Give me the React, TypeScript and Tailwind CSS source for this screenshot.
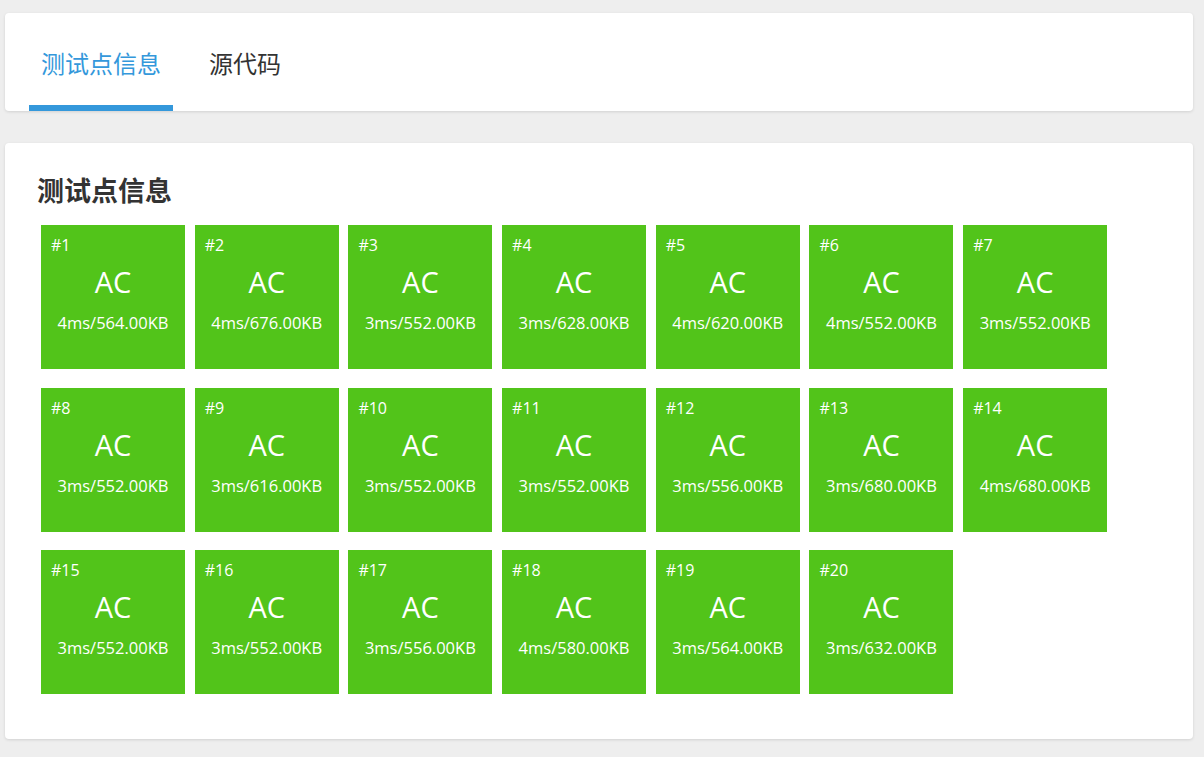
import React from "react";

const data: [string, string][] = [
  ["4ms", "564.00KB"], ["4ms", "676.00KB"], ["3ms", "552.00KB"], ["3ms", "628.00KB"], ["4ms", "620.00KB"],
  ["4ms", "552.00KB"], ["3ms", "552.00KB"], ["3ms", "552.00KB"], ["3ms", "616.00KB"], ["3ms", "552.00KB"],
  ["3ms", "552.00KB"], ["3ms", "556.00KB"], ["3ms", "680.00KB"], ["4ms", "680.00KB"], ["3ms", "552.00KB"],
  ["3ms", "552.00KB"], ["3ms", "556.00KB"], ["4ms", "580.00KB"], ["3ms", "564.00KB"], ["3ms", "632.00KB"],
];

export default function App() {
  return (
    <div
      className="min-h-[757px] bg-[#eeeeee] pl-[5px] pr-[11px] pt-[13px] pb-[18px]"
      style={{ fontFamily: '"Open Sans", "Noto Sans CJK SC", sans-serif' }}
    >
      <div className="bg-white rounded-[4px] shadow-[0_1px_3px_rgba(0,0,0,0.12)] h-[98px] flex items-end px-[24px]">
        <div className="w-[144px] h-full flex flex-col">
          <div className="flex-1 flex items-center justify-center pt-[10px] text-[24px] text-[#3498db]">测试点信息</div>
          <div className="h-[6px] bg-[#3498db]" />
        </div>
        <div className="w-[144px] h-full flex flex-col">
          <div className="flex-1 flex items-center justify-center pt-[10px] text-[24px] text-[#333333]">源代码</div>
          <div className="h-[6px]" />
        </div>
      </div>

      <div className="mt-[32px] bg-white rounded-[4px] shadow-[0_1px_3px_rgba(0,0,0,0.12)] pl-[32px] pt-[30px] pb-[45px]">
        <h2 className="text-[27px] font-bold text-[#333333] leading-[36px]">测试点信息</h2>
        <div className="mt-[16px] ml-[4px] grid grid-cols-[repeat(7,144px)] gap-x-[9.7px] gap-y-[18.5px]">
          {data.map(([t, m], i) => (
            <div key={i} className="w-[144px] h-[144px] bg-[#52c41a] text-white flex flex-col">
              <div className="pl-[10px] pt-[10px] text-[16px] leading-[20px]">#{i + 1}</div>
              <div className="text-center text-[29px] leading-[36px] mt-[9px]">AC</div>
              <div className="text-center text-[16.5px] leading-[20px] mt-[13px] whitespace-nowrap">
                {t}/{m}
              </div>
            </div>
          ))}
        </div>
      </div>
    </div>
  );
}
